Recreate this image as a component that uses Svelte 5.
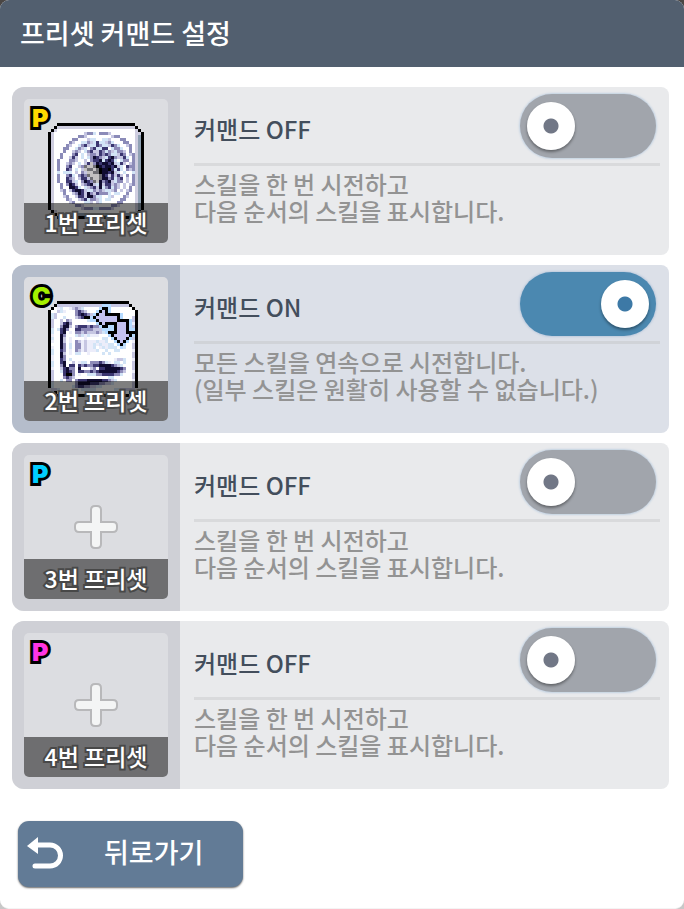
<script lang="ts">
	type Preset = {
		id: number;
		badge: string;
		tone: string;
		on: boolean;
		icon?: 'sigil' | 'cannon';
	};

	let presets = $state<Preset[]>([
		{ id: 1, badge: 'P', tone: 'yellow', on: false, icon: 'sigil' },
		{ id: 2, badge: 'C', tone: 'lime', on: true, icon: 'cannon' },
		{ id: 3, badge: 'P', tone: 'cyan', on: false },
		{ id: 4, badge: 'P', tone: 'pink', on: false }
	]);

	const palette: Record<string, string> = {
		r: '#8b8bb8',
		l: '#c6c6e2',
		b: '#d2e4f6',
		p: '#ecedfa',
		m: '#8d8ab8',
		n: '#3b3670',
		d: '#100c30',
		g: '#6f6e74',
		s: '#c4c1c2',
		k: '#000000',
		a: '#c3c1f0',
		h: '#b5daff'
	};

	const sigil = [
		'.........lrrb.rrrl........',
		'.......rrl........lrr.....',
		'.....rr...lbb..bbl...rr...',
		'....rl..bbmlbnbblmb...rr..',
		'...rl..bmnlbbnmbblnmb..lr.',
		'..rr..bmlb.mnbbnn.bmmb..r.',
		'..r..lml.bmnllnmbmlbmml.r.',
		'.r...mn.b.lmmlnmnmbblnm.lr',
		'.r..lnl.b.bmdnmlbndmllnb.r',
		'r...mml..l.mnndbndnb.bmm.r',
		'r..lml.b.lnsmdnddndlbnl.lr',
		'r..mn..lmgssgkdnddndlb.nmr',
		'r..nm.b.lsggsgkddknbnb.mlr',
		'b.bbb.l.mlssggkddndlb.b..b',
		'r..mnb.mnmgsssgdnlnlnl.m.r',
		'r..nml.lnnlgssgddmnbmn.l.r',
		'r..nnlb.mdnmgsdmndlbmm.l.r',
		'.r.mdnl.lmndlbdlnnlml.l.lr',
		'.r..ddnb.blmnldbmnbml.l.r.',
		'.lr.lnddnlbbmlmlbblm.l.lr.',
		'..r..lmdnldmlnmmmb.bb..r..',
		'..lr..lnnlddmbb..bl...rl..',
		'...rl..lmnbmmlb.bb...rr...',
		'....lr...bbl.lb.....rr....',
		'......rrl.........rrl.....',
		'........lrrrbbrrrrl.......'
	];

	const cannon = [
		'lllllllllllllllllllllllllll',
		'b.pb..plmlb',
		'..lbp...mnml',
		'bl......mndnmlb',
		'bl..b...lmnkkkkb...........l',
		'l..l.ml.....bllb...........l',
		'l..lndm....................p',
		'l..mddl.mnnnmnmmmlb.b......l',
		'b.bndm..nnmmmmlllmb.lb.....l',
		'b..nd.p.mmlmlllmlb.bm.b....p',
		'p..dm...blbpbppp...........l',
		'b..dl.p....p.....bb........l',
		'p..dl.p.mlplpppbppb........p',
		'...dm.b.mmplppbpbppbb......l',
		'p..dm.b.mmplppb.pbpbbb.bb..l',
		'b..nm.p.mlplpppb..b..bb....p',
		'b..dl.p.bb..p....b.b.......l',
		'p..dm......................l',
		'p..nm.b..............pllb..p',
		'b..nd..l.pbb.mmmnmbp.bb.b..l',
		'b..md.nn.nmnmmnnddddnmlb...l',
		'p..lndmm.d...lm.nndddddnm..l',
		'l..bndnm.nnmmnmnddddddnml..p',
		'l...nkkm.p..bbbmmnnnnmmb...l',
		'l...mnml...........bb......l',
		'l..b.mm.mnnndddddnnmlb.....p',
		'b.......mddddnnnmmllb......l',
		'b......bmnnmmllbb..........l',
		'llb.......bbbbb......bblllll'
	];

	// swap arrow laid over the cannon
	const arrow = [
		'....hhh',
		'...hkkh',
		'..hkakh',
		'.hkaakkkkkh',
		'hkaaaaaaakh',
		'hhkaaaaaakkkkh',
		'..hkakkkkaaakh',
		'...hkkhhkaaakh',
		'....hhhhkaaakhh',
		'.....hkkkaaakkk',
		'......hkaaaaakh',
		'.......hkaaakh',
		'........hkakh',
		'.........hkh',
		'..........h'
	];

	function cells(rows: string[], dx: number, dy: number) {
		return rows.flatMap((row, y) =>
			[...row]
				.map((c, x) => ({ x: x + dx, y: y + dy, fill: palette[c] }))
				.filter((c) => c.fill)
		);
	}

	const art = {
		sigil: cells(sigil, 3, 3),
		cannon: [...cells(cannon, 1, 1), ...cells(arrow, 14, 1)]
	};
</script>

<div class="window">
	<header>
		<h1>프리셋 커맨드 설정</h1>
	</header>

	<main>
		{#each presets as p (p.id)}
			<section class="card" class:on={p.on}>
				<div class="side">
					<button class="slot" type="button">
						{#if p.icon === 'sigil'}
							<svg viewBox="0 0 32 32" width="96" height="96" shape-rendering="crispEdges" aria-hidden="true">
								<path fill="#000" d="M3 0h26v1h1v1h1v1h1v26h-1v1h-1v1h-1v1H3v-1H2v-1H1v-1H0V3h1V2h1V1h1z" />
								<path fill="#cfcee0" d="M3 1h26v1h1v1h1v26h-1v1h-1v1H3v-1H2v-1H1V3h1V2h1z" />
								<path fill="#fff" d="M3 2h26v28H3v-1H2V3h1z" />
								<path fill="#8fa1b3" d="M30 4h1v25h-1zM4 30h25v1H4z" />
								{#each art.sigil as c}
									<rect x={c.x} y={c.y} width="1" height="1" fill={c.fill} />
								{/each}
							</svg>
						{:else if p.icon === 'cannon'}
							<svg viewBox="0 0 32 32" width="96" height="96" shape-rendering="crispEdges" aria-hidden="true">
								<path fill="#000" d="M3 0h24v1h1v1h1v1h1v26h-1v1h-1v1h-1v1H3v-1H2v-1H1v-1H0V3h1V2h1V1h1z" />
								<path fill="#fff" d="M3 1h24v1h1v1h1v26h-1v1h-1v1H3v-1H2v-1H1V3h1V2h1z" />
								{#each art.cannon as c}
									{#if c.x + c.y > 3 && c.x - c.y < 26}
										<rect x={c.x} y={c.y} width="1" height="1" fill={c.fill} />
									{/if}
								{/each}
							</svg>
						{:else}
							<svg viewBox="0 0 44 44" width="44" height="44" aria-hidden="true">
								<path
									d="M21 1h2q4 0 4 4v12h12q4 0 4 4v2q0 4-4 4H27v12q0 4-4 4h-2q-4 0-4-4V27H5q-4 0-4-4v-2q0-4 4-4h12V5q0-4 4-4z"
									fill="#f4f5f5"
									stroke="#b8b8ba"
									stroke-width="2"
								/>
							</svg>
						{/if}
						<span class="badge {p.tone}">{p.badge}</span>
						<span class="caption">{p.id}번 프리셋</span>
					</button>
				</div>

				<div class="info">
					<div class="head">
						<label for="command-{p.id}">커맨드 {p.on ? 'ON' : 'OFF'}</label>
						<input id="command-{p.id}" type="checkbox" role="switch" bind:checked={p.on} />
					</div>
					<p>
						{#if p.on}
							모든 스킬을 연속으로 시전합니다.<br />(일부 스킬은 원활히 사용할 수 없습니다.)
						{:else}
							스킬을 한 번 시전하고<br />다음 순서의 스킬을 표시합니다.
						{/if}
					</p>
				</div>
			</section>
		{/each}
	</main>

	<footer>
		<button class="back" type="button">
			<svg viewBox="0 0 36 34" width="36" height="34" aria-hidden="true">
				<path d="M0 9L11 0v17z" fill="#fff" />
				<path d="M9 8h14a10 10 0 0 1 0 21H8" fill="none" stroke="#fff" stroke-width="5" stroke-linecap="round" />
			</svg>
			<span>뒤로가기</span>
		</button>
	</footer>
</div>

<style>
	:global(body) {
		margin: 0;
		background: linear-gradient(#4a4644, #c8c8c8);
	}

	.window {
		display: flex;
		flex-direction: column;
		min-height: 100vh;
		box-sizing: border-box;
		border-radius: 9px;
		overflow: hidden;
		background: #fff;
		border-bottom: 1px solid #f4f4f4;
		font-family: 'Noto Sans CJK KR', 'Noto Sans', sans-serif;
	}

	header {
		display: flex;
		align-items: center;
		height: 67px;
		padding: 0 20px;
		background: #525f6f;
	}
	h1 {
		margin: 0;
		padding-bottom: 2px;
		color: #fff;
		font-size: 27px;
		font-weight: 500;
		line-height: 40px;
	}

	main {
		display: flex;
		flex-direction: column;
		gap: 10px;
		padding: 20px 15px 0 12px;
	}

	.card {
		display: flex;
		min-height: 168px;
		border-radius: 12px 8px 8px 12px;
		overflow: hidden;
		background: #e9eaec;
	}
	.card.on {
		background: #dce0e8;
	}
	.side {
		flex: none;
		padding: 12px;
		background: #cfd0d6;
	}
	.on .side {
		background: #b5bdcb;
	}

	.slot {
		position: relative;
		display: flex;
		align-items: center;
		justify-content: center;
		width: 144px;
		height: 144px;
		padding: 0;
		border: 0;
		border-radius: 5px;
		overflow: hidden;
		background: #dcdde1;
		font-family: inherit;
		cursor: pointer;
	}
	.badge {
		position: absolute;
		top: 3px;
		left: 8px;
		font-family: Inter, sans-serif;
		font-size: 25px;
		font-weight: 900;
		line-height: 32px;
		-webkit-text-stroke: 6px #000;
		paint-order: stroke fill;
		stroke-linejoin: round;
	}
	.yellow {
		color: #ffd800;
	}
	.lime {
		color: #a4f000;
	}
	.cyan {
		color: #00ceff;
	}
	.pink {
		color: #ff35e4;
	}
	.caption {
		position: absolute;
		right: 0;
		bottom: 0;
		left: 0;
		height: 40px;
		background: rgba(0, 0, 0, 0.5);
		color: #fff;
		font-size: 23px;
		font-weight: 500;
		line-height: 38px;
		-webkit-text-stroke: 4px #484848;
		paint-order: stroke fill;
		stroke-linejoin: round;
	}

	.info {
		flex: 1;
		min-width: 0;
		padding: 0 9px 0 14px;
	}
	.head {
		display: flex;
		align-items: center;
		justify-content: space-between;
		height: 76px;
		border-bottom: 3px solid #d9dadc;
	}
	.on .head {
		border-color: #d0d3d8;
	}
	label {
		padding-top: 8px;
		color: #434e5c;
		font-size: 24px;
		font-weight: 500;
		line-height: 32px;
	}

	input {
		appearance: none;
		display: flex;
		align-items: center;
		width: 136px;
		height: 64px;
		margin: 2px 4px 0 0;
		padding: 0 7px;
		box-sizing: border-box;
		border-radius: 32px;
		background: #a1a5ac;
		box-shadow: 0 0 2px 1px #c3d2e2;
		cursor: pointer;
	}
	input::before {
		content: '';
		width: 48px;
		height: 48px;
		border-radius: 50%;
		background: radial-gradient(circle, #717786 7px, #fff 8px);
		box-shadow: 0 2px 3px rgba(0, 0, 0, 0.4);
	}
	input:checked {
		justify-content: flex-end;
		background: #4b88b0;
		box-shadow: 0 0 2px 1px #bccadd;
	}
	input:checked::before {
		background: radial-gradient(circle, #3d79a6 7px, #fff 8px);
	}

	p {
		margin: 4px 0 0;
		color: #939393;
		font-size: 24px;
		font-weight: 500;
		line-height: 27px;
	}

	footer {
		padding: 32px 18px 21px;
	}
	.back {
		display: flex;
		align-items: center;
		gap: 41px;
		width: 225px;
		height: 66px;
		padding: 0 9px;
		border: 0;
		border-radius: 11px;
		background: #627b96;
		box-shadow: 0 1px 2px rgba(0, 0, 0, 0.6);
		color: #fff;
		font-family: inherit;
		font-size: 27px;
		font-weight: 500;
		line-height: 40px;
		cursor: pointer;
	}
	.back span {
		padding-bottom: 5px;
	}
</style>
